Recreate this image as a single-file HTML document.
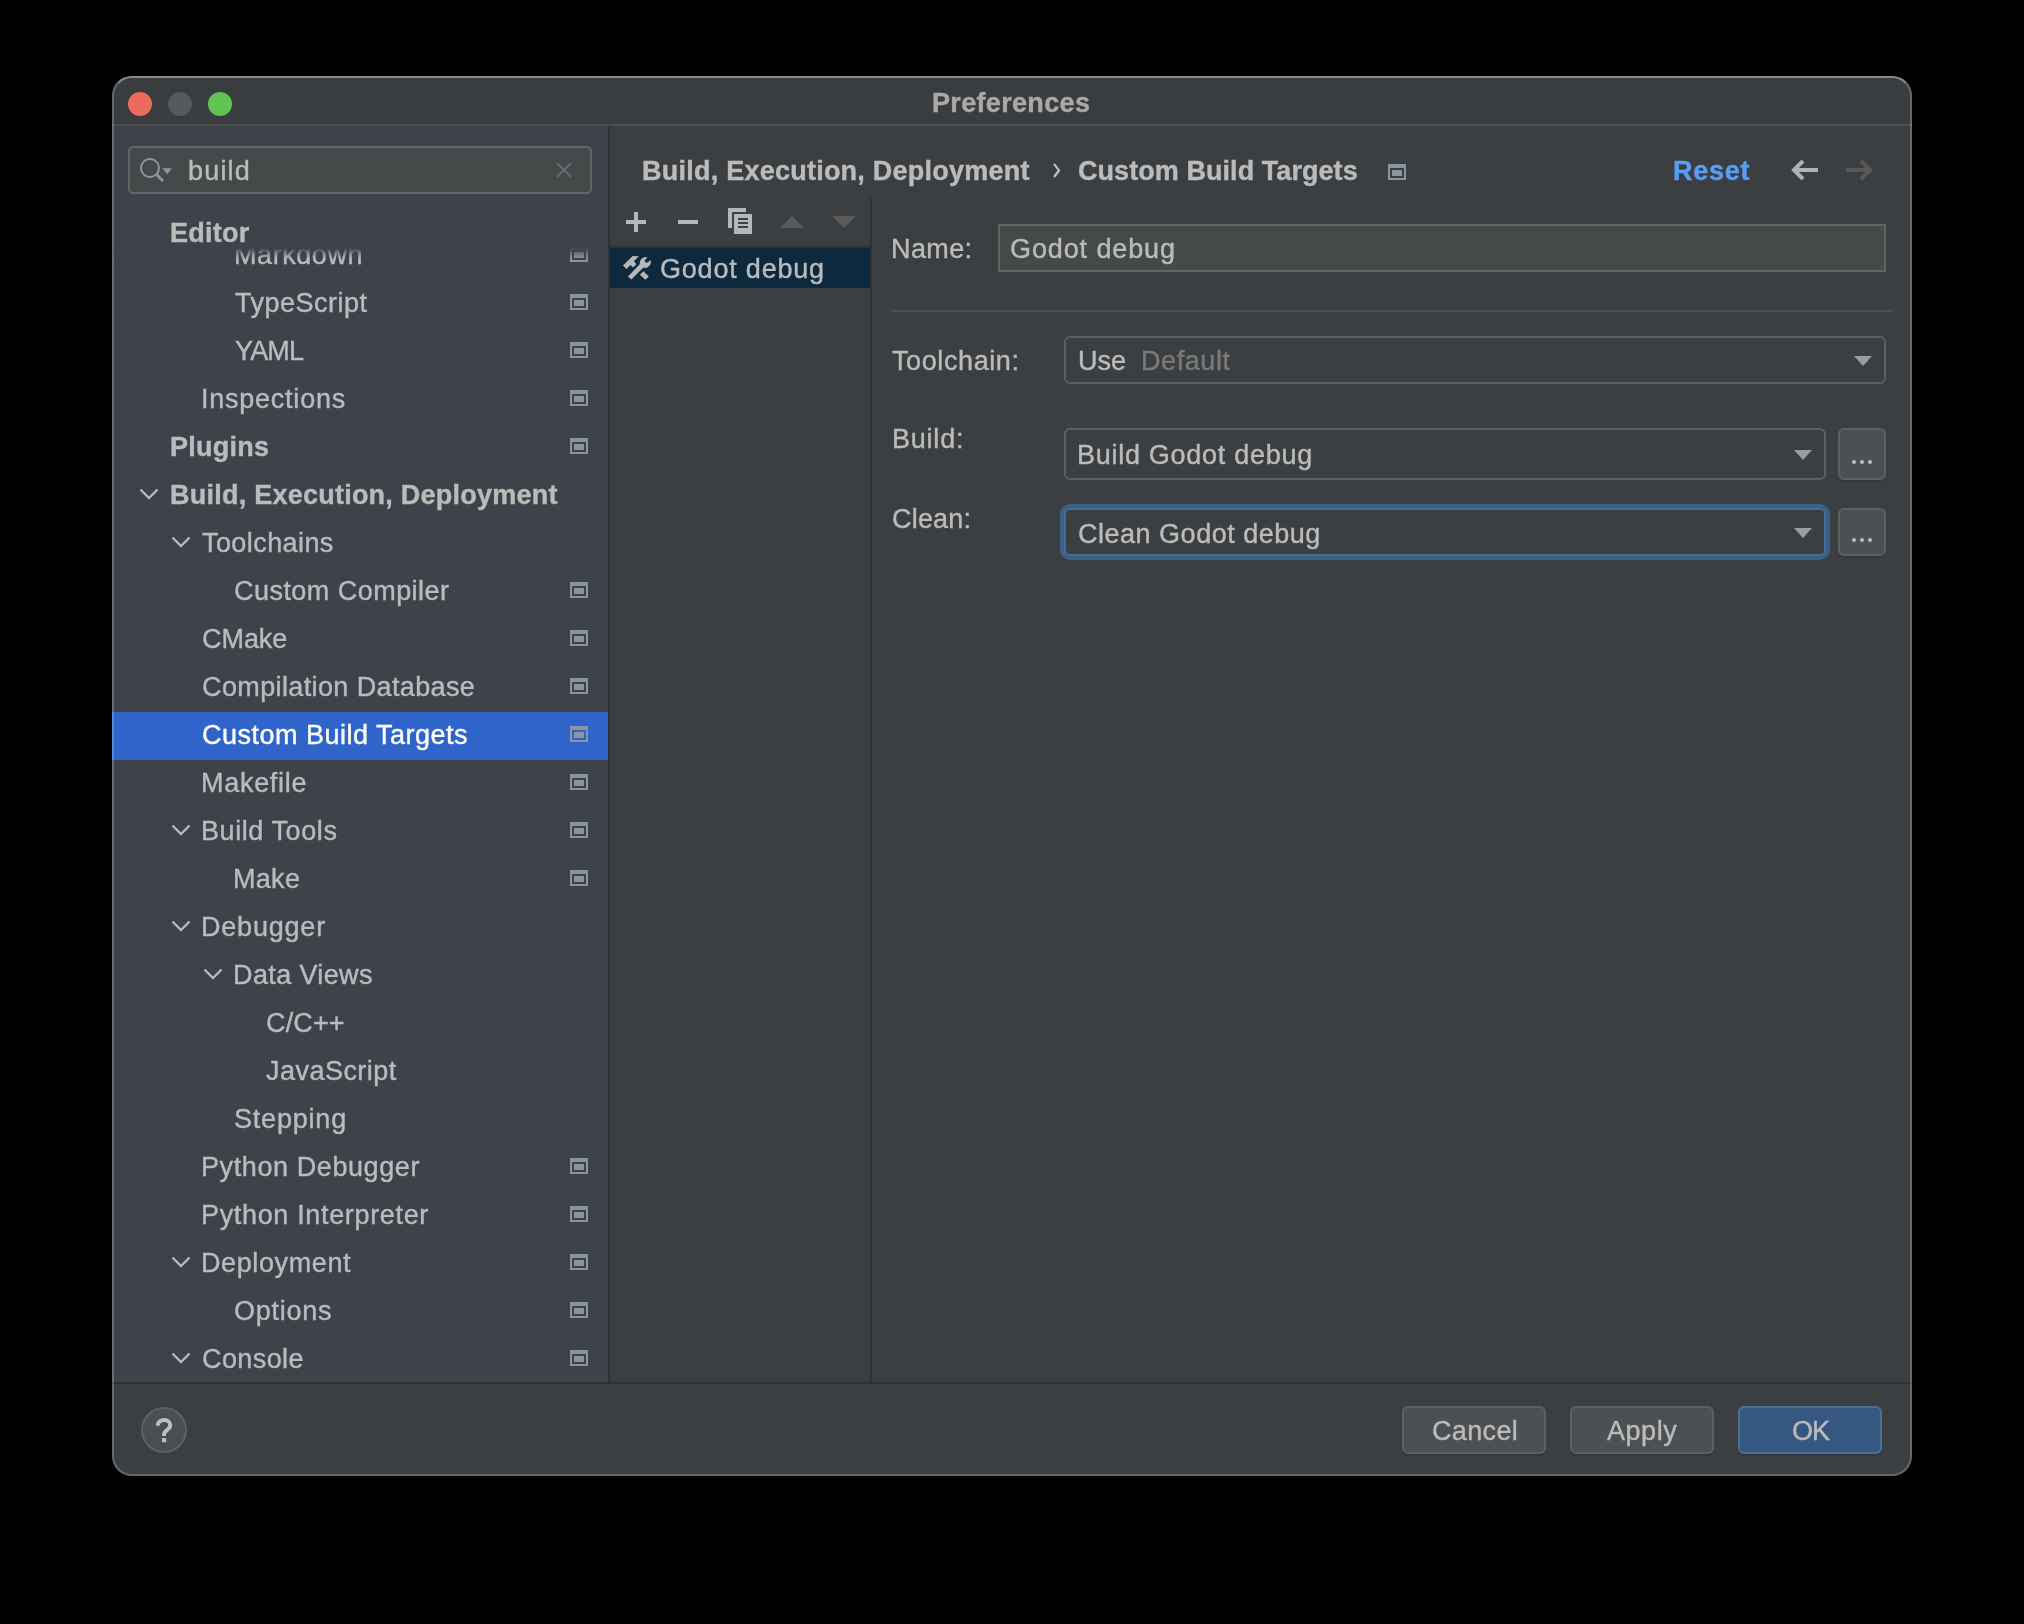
<!DOCTYPE html>
<html><head><meta charset="utf-8"><title>Preferences</title>
<style>
html,body{margin:0;padding:0;background:#000;width:2024px;height:1624px;overflow:hidden}
body{position:relative;font-family:'Liberation Sans', sans-serif}
.a{position:absolute}
.t{position:absolute;white-space:pre;will-change:transform;-webkit-text-stroke:0.4px currentColor}
.ic{position:absolute;width:18px;height:16px}
</style></head><body>

<div class="a" style="left:112px;top:76px;width:1800px;height:1400px;border-radius:20px;background:#3c3f41;overflow:hidden">
</div>
<div class="a" style="left:112px;top:76px;width:1800px;height:48px;border-radius:20px 20px 0 0;background:#3a3d3f"></div>
<div class="a" style="left:112px;top:124px;width:1800px;height:2px;background:#4e4e4e"></div>
<div class="a" style="left:128px;top:92px;width:24px;height:24px;border-radius:50%;background:#ed6a5e"></div>
<div class="a" style="left:168px;top:92px;width:24px;height:24px;border-radius:50%;background:#575a5d"></div>
<div class="a" style="left:208px;top:92px;width:24px;height:24px;border-radius:50%;background:#61c454"></div>
<div class="t" style="left:931.8px;top:90.0px;font-weight:bold;font-size:27px;line-height:27px;color:#a9a9a9;letter-spacing:0.33px">Preferences</div>
<div class="a" style="left:112px;top:126px;width:496px;height:1256px;background:#3e424b"></div>
<div class="a" style="left:608px;top:126px;width:2px;height:1256px;background:#303234"></div>
<div class="a" style="left:112px;top:1382px;width:1800px;height:2px;background:#323232"></div>
<div class="a" style="left:128px;top:146px;width:460px;height:44px;border:2px solid #646464;border-radius:5px;background:#45494a"></div>
<svg class="a" style="left:136px;top:154px" width="40" height="32" viewBox="136 154 40 32"><circle cx="150" cy="168" r="9" fill="none" stroke="#8c96a0" stroke-width="2"/><line x1="156.5" y1="174.5" x2="163" y2="181" stroke="#8c96a0" stroke-width="2.8"/><polygon points="162.3,168.2 172,168.2 167.2,174.3" fill="#8c96a0"/></svg>
<div class="t" style="left:187.6px;top:158.3px;font-weight:normal;font-size:27px;line-height:27px;color:#bbbbbb;letter-spacing:1.18px">build</div>
<svg class="a" style="left:552px;top:158px" width="24" height="24" viewBox="0 0 24 24"><path d="M5 5 L19 19 M19 5 L5 19" stroke="#626b71" stroke-width="2"/></svg>
<div class="a" style="left:112px;top:248px;width:496px;height:1134px;overflow:hidden">
<div class="a" style="left:0px;top:464px;width:496px;height:48px;background:#2f65ca"></div>
<div class="t" style="left:121.8px;top:-6.0px;font-weight:normal;font-size:27px;line-height:27px;color:#bbbbbb;letter-spacing:0.56px">Markdown</div>
<svg class="a" style="left:458px;top:-2px" width="18" height="16" viewBox="0 0 18 16"><rect x="0" y="0" width="18" height="16" fill="#8a959f"/><rect x="2" y="4" width="14" height="10" fill="#3e424b"/><rect x="4" y="6" width="10" height="6" fill="#8a959f"/></svg>
<div class="t" style="left:122.5px;top:42.0px;font-weight:normal;font-size:27px;line-height:27px;color:#bbbbbb;letter-spacing:0.50px">TypeScript</div>
<svg class="a" style="left:458px;top:46px" width="18" height="16" viewBox="0 0 18 16"><rect x="0" y="0" width="18" height="16" fill="#8a959f"/><rect x="2" y="4" width="14" height="10" fill="#3e424b"/><rect x="4" y="6" width="10" height="6" fill="#8a959f"/></svg>
<div class="t" style="left:122.5px;top:90.0px;font-weight:normal;font-size:27px;line-height:27px;color:#bbbbbb;letter-spacing:-0.83px">YAML</div>
<svg class="a" style="left:458px;top:94px" width="18" height="16" viewBox="0 0 18 16"><rect x="0" y="0" width="18" height="16" fill="#8a959f"/><rect x="2" y="4" width="14" height="10" fill="#3e424b"/><rect x="4" y="6" width="10" height="6" fill="#8a959f"/></svg>
<div class="t" style="left:89.0px;top:138.0px;font-weight:normal;font-size:27px;line-height:27px;color:#bbbbbb;letter-spacing:0.76px">Inspections</div>
<svg class="a" style="left:458px;top:142px" width="18" height="16" viewBox="0 0 18 16"><rect x="0" y="0" width="18" height="16" fill="#8a959f"/><rect x="2" y="4" width="14" height="10" fill="#3e424b"/><rect x="4" y="6" width="10" height="6" fill="#8a959f"/></svg>
<div class="t" style="left:57.5px;top:186.0px;font-weight:bold;font-size:27px;line-height:27px;color:#bbbbbb;letter-spacing:0.25px">Plugins</div>
<svg class="a" style="left:458px;top:190px" width="18" height="16" viewBox="0 0 18 16"><rect x="0" y="0" width="18" height="16" fill="#8a959f"/><rect x="2" y="4" width="14" height="10" fill="#3e424b"/><rect x="4" y="6" width="10" height="6" fill="#8a959f"/></svg>
<div class="t" style="left:57.5px;top:234.0px;font-weight:bold;font-size:27px;line-height:27px;color:#bbbbbb;letter-spacing:0.24px">Build, Execution, Deployment</div>
<svg class="a" style="left:25.3px;top:238px" width="24" height="16" viewBox="0 0 24 16"><path d="M3.5 3.5 L12 12 L20.5 3.5" fill="none" stroke="#bababa" stroke-width="2.3"/></svg>
<div class="t" style="left:90.0px;top:282.0px;font-weight:normal;font-size:27px;line-height:27px;color:#bbbbbb;letter-spacing:0.42px">Toolchains</div>
<svg class="a" style="left:57.3px;top:286px" width="24" height="16" viewBox="0 0 24 16"><path d="M3.5 3.5 L12 12 L20.5 3.5" fill="none" stroke="#bababa" stroke-width="2.3"/></svg>
<div class="t" style="left:122.0px;top:330.0px;font-weight:normal;font-size:27px;line-height:27px;color:#bbbbbb;letter-spacing:0.46px">Custom Compiler</div>
<svg class="a" style="left:458px;top:334px" width="18" height="16" viewBox="0 0 18 16"><rect x="0" y="0" width="18" height="16" fill="#8a959f"/><rect x="2" y="4" width="14" height="10" fill="#3e424b"/><rect x="4" y="6" width="10" height="6" fill="#8a959f"/></svg>
<div class="t" style="left:90.0px;top:378.0px;font-weight:normal;font-size:27px;line-height:27px;color:#bbbbbb;letter-spacing:-0.05px">CMake</div>
<svg class="a" style="left:458px;top:382px" width="18" height="16" viewBox="0 0 18 16"><rect x="0" y="0" width="18" height="16" fill="#8a959f"/><rect x="2" y="4" width="14" height="10" fill="#3e424b"/><rect x="4" y="6" width="10" height="6" fill="#8a959f"/></svg>
<div class="t" style="left:90.0px;top:426.0px;font-weight:normal;font-size:27px;line-height:27px;color:#bbbbbb;letter-spacing:0.38px">Compilation Database</div>
<svg class="a" style="left:458px;top:430px" width="18" height="16" viewBox="0 0 18 16"><rect x="0" y="0" width="18" height="16" fill="#8a959f"/><rect x="2" y="4" width="14" height="10" fill="#3e424b"/><rect x="4" y="6" width="10" height="6" fill="#8a959f"/></svg>
<div class="t" style="left:90.0px;top:474.0px;font-weight:normal;font-size:27px;line-height:27px;color:#ffffff;letter-spacing:0.49px">Custom Build Targets</div>
<svg class="a" style="left:458px;top:478px" width="18" height="16" viewBox="0 0 18 16"><rect x="0" y="0" width="18" height="16" fill="#8a959f"/><rect x="2" y="4" width="14" height="10" fill="#2f65ca"/><rect x="4" y="6" width="10" height="6" fill="#8a959f"/></svg>
<div class="t" style="left:89.0px;top:522.0px;font-weight:normal;font-size:27px;line-height:27px;color:#bbbbbb;letter-spacing:0.71px">Makefile</div>
<svg class="a" style="left:458px;top:526px" width="18" height="16" viewBox="0 0 18 16"><rect x="0" y="0" width="18" height="16" fill="#8a959f"/><rect x="2" y="4" width="14" height="10" fill="#3e424b"/><rect x="4" y="6" width="10" height="6" fill="#8a959f"/></svg>
<div class="t" style="left:89.0px;top:570.0px;font-weight:normal;font-size:27px;line-height:27px;color:#bbbbbb;letter-spacing:0.58px">Build Tools</div>
<svg class="a" style="left:458px;top:574px" width="18" height="16" viewBox="0 0 18 16"><rect x="0" y="0" width="18" height="16" fill="#8a959f"/><rect x="2" y="4" width="14" height="10" fill="#3e424b"/><rect x="4" y="6" width="10" height="6" fill="#8a959f"/></svg>
<svg class="a" style="left:57.3px;top:574px" width="24" height="16" viewBox="0 0 24 16"><path d="M3.5 3.5 L12 12 L20.5 3.5" fill="none" stroke="#bababa" stroke-width="2.3"/></svg>
<div class="t" style="left:121.0px;top:618.0px;font-weight:normal;font-size:27px;line-height:27px;color:#bbbbbb;letter-spacing:0.30px">Make</div>
<svg class="a" style="left:458px;top:622px" width="18" height="16" viewBox="0 0 18 16"><rect x="0" y="0" width="18" height="16" fill="#8a959f"/><rect x="2" y="4" width="14" height="10" fill="#3e424b"/><rect x="4" y="6" width="10" height="6" fill="#8a959f"/></svg>
<div class="t" style="left:89.0px;top:666.0px;font-weight:normal;font-size:27px;line-height:27px;color:#bbbbbb;letter-spacing:0.79px">Debugger</div>
<svg class="a" style="left:57.3px;top:670px" width="24" height="16" viewBox="0 0 24 16"><path d="M3.5 3.5 L12 12 L20.5 3.5" fill="none" stroke="#bababa" stroke-width="2.3"/></svg>
<div class="t" style="left:121.0px;top:714.0px;font-weight:normal;font-size:27px;line-height:27px;color:#bbbbbb;letter-spacing:0.38px">Data Views</div>
<svg class="a" style="left:89.3px;top:718px" width="24" height="16" viewBox="0 0 24 16"><path d="M3.5 3.5 L12 12 L20.5 3.5" fill="none" stroke="#bababa" stroke-width="2.3"/></svg>
<div class="t" style="left:153.8px;top:762.0px;font-weight:normal;font-size:27px;line-height:27px;color:#bbbbbb;letter-spacing:0.15px">C/C++</div>
<div class="t" style="left:153.8px;top:810.0px;font-weight:normal;font-size:27px;line-height:27px;color:#bbbbbb;letter-spacing:0.47px">JavaScript</div>
<div class="t" style="left:122.0px;top:858.0px;font-weight:normal;font-size:27px;line-height:27px;color:#bbbbbb;letter-spacing:0.80px">Stepping</div>
<div class="t" style="left:89.0px;top:906.0px;font-weight:normal;font-size:27px;line-height:27px;color:#bbbbbb;letter-spacing:0.59px">Python Debugger</div>
<svg class="a" style="left:458px;top:910px" width="18" height="16" viewBox="0 0 18 16"><rect x="0" y="0" width="18" height="16" fill="#8a959f"/><rect x="2" y="4" width="14" height="10" fill="#3e424b"/><rect x="4" y="6" width="10" height="6" fill="#8a959f"/></svg>
<div class="t" style="left:89.0px;top:954.0px;font-weight:normal;font-size:27px;line-height:27px;color:#bbbbbb;letter-spacing:0.66px">Python Interpreter</div>
<svg class="a" style="left:458px;top:958px" width="18" height="16" viewBox="0 0 18 16"><rect x="0" y="0" width="18" height="16" fill="#8a959f"/><rect x="2" y="4" width="14" height="10" fill="#3e424b"/><rect x="4" y="6" width="10" height="6" fill="#8a959f"/></svg>
<div class="t" style="left:89.0px;top:1002.0px;font-weight:normal;font-size:27px;line-height:27px;color:#bbbbbb;letter-spacing:0.61px">Deployment</div>
<svg class="a" style="left:458px;top:1006px" width="18" height="16" viewBox="0 0 18 16"><rect x="0" y="0" width="18" height="16" fill="#8a959f"/><rect x="2" y="4" width="14" height="10" fill="#3e424b"/><rect x="4" y="6" width="10" height="6" fill="#8a959f"/></svg>
<svg class="a" style="left:57.3px;top:1006px" width="24" height="16" viewBox="0 0 24 16"><path d="M3.5 3.5 L12 12 L20.5 3.5" fill="none" stroke="#bababa" stroke-width="2.3"/></svg>
<div class="t" style="left:122.0px;top:1050.0px;font-weight:normal;font-size:27px;line-height:27px;color:#bbbbbb;letter-spacing:0.73px">Options</div>
<svg class="a" style="left:458px;top:1054px" width="18" height="16" viewBox="0 0 18 16"><rect x="0" y="0" width="18" height="16" fill="#8a959f"/><rect x="2" y="4" width="14" height="10" fill="#3e424b"/><rect x="4" y="6" width="10" height="6" fill="#8a959f"/></svg>
<div class="t" style="left:90.0px;top:1098.0px;font-weight:normal;font-size:27px;line-height:27px;color:#bbbbbb;letter-spacing:0.40px">Console</div>
<svg class="a" style="left:458px;top:1102px" width="18" height="16" viewBox="0 0 18 16"><rect x="0" y="0" width="18" height="16" fill="#8a959f"/><rect x="2" y="4" width="14" height="10" fill="#3e424b"/><rect x="4" y="6" width="10" height="6" fill="#8a959f"/></svg>
<svg class="a" style="left:57.3px;top:1102px" width="24" height="16" viewBox="0 0 24 16"><path d="M3.5 3.5 L12 12 L20.5 3.5" fill="none" stroke="#bababa" stroke-width="2.3"/></svg>
</div>
<div class="a" style="left:112px;top:246px;width:496px;height:14px;background:linear-gradient(#3e424b 0px,#3e424b 2px,rgba(62,66,75,0.8) 4px,rgba(62,66,75,0.35) 8px,rgba(62,66,75,0) 13px)"></div>
<div class="t" style="left:169.7px;top:220.0px;font-weight:bold;font-size:27px;line-height:27px;color:#bbbbbb;letter-spacing:0.26px">Editor</div>
<div class="t" style="left:641.5px;top:158.3px;font-weight:bold;font-size:27px;line-height:27px;color:#bbbbbb;letter-spacing:0.24px">Build, Execution, Deployment</div>
<svg class="a" style="left:1050px;top:160px" width="14" height="24" viewBox="0 0 14 24"><path d="M4 3.8 L9 10.4 L4 17" fill="none" stroke="#c2c2c2" stroke-width="2.2"/></svg>
<div class="t" style="left:1077.9px;top:158.3px;font-weight:bold;font-size:27px;line-height:27px;color:#bbbbbb;letter-spacing:0.06px">Custom Build Targets</div>
<svg class="a" style="left:1388px;top:164px" width="18" height="16" viewBox="0 0 18 16"><rect x="0" y="0" width="18" height="16" fill="#8a959f"/><rect x="2" y="4" width="14" height="10" fill="#3c3f41"/><rect x="4" y="6" width="10" height="6" fill="#8a959f"/></svg>
<div class="t" style="left:1673.0px;top:157.8px;font-weight:bold;font-size:27px;line-height:27px;color:#589df6;letter-spacing:0.75px">Reset</div>
<svg class="a" style="left:1788px;top:156px" width="34" height="28" viewBox="0 0 34 28"><path d="M6 14 H30 M15 5 L6 14 L15 23" fill="none" stroke="#afb1b3" stroke-width="4"/></svg>
<svg class="a" style="left:1842px;top:156px" width="34" height="28" viewBox="0 0 34 28"><path d="M4 14 H28 M19 5 L28 14 L19 23" fill="none" stroke="#585858" stroke-width="4"/></svg>
<svg class="a" style="left:620px;top:200px" width="250" height="44" viewBox="620 200 250 44"><rect x="634" y="212" width="4" height="20" fill="#b5b6b8"/><rect x="626" y="220" width="20" height="4" fill="#b5b6b8"/><rect x="678" y="220" width="20" height="4" fill="#b5b6b8"/><path d="M728 208 H746 V212 H732 V228 H728 Z" fill="#b5b6b8"/><rect x="734" y="214" width="18" height="20" fill="#b5b6b8"/><rect x="738" y="218" width="10" height="2" fill="#3c3f41"/><rect x="738" y="222" width="10" height="2" fill="#3c3f41"/><rect x="738" y="226" width="10" height="2" fill="#3c3f41"/><polygon points="780,228 804,228 792,216" fill="#5a5a5a"/><polygon points="832,216 856,216 844,228" fill="#5a5a5a"/></svg>
<div class="a" style="left:610px;top:246px;width:260px;height:2px;background:#323232"></div>
<div class="a" style="left:610px;top:248px;width:260px;height:40px;background:#0d293e"></div>
<svg class="a" style="left:620px;top:252px" width="34" height="32" viewBox="620 252 34 32"><polygon points="623,265.6 632.6,256.1 638.9,256.2 633.8,261.3 636.5,264.2 633,267.4 630.4,265 626.5,269" fill="#b5b6b8"/><polygon points="643.4,271.2 648.8,276.6 645.4,279.8 639.9,274.7" fill="#b5b6b8"/><polygon points="627.9,276.6 639.7,264.2 639.9,261.9 641,259.3 642.7,257.9 645,257.1 647.4,257.2 644.4,260.7 646.4,263 650.7,260.3 651,262.5 650.4,264.6 647.6,267.4 645,268 643.2,267.8 631.4,279.6" fill="#b5b6b8"/></svg>
<div class="t" style="left:659.8px;top:256.0px;font-weight:normal;font-size:27px;line-height:27px;color:#bbbbbb;letter-spacing:0.80px">Godot debug</div>
<div class="a" style="left:870px;top:198px;width:2px;height:1184px;background:#303234"></div>
<div class="t" style="left:890.9px;top:236.0px;font-weight:normal;font-size:27px;line-height:27px;color:#bbbbbb;letter-spacing:0.40px">Name:</div>
<div class="a" style="left:998px;top:224px;width:884px;height:44px;border:2px solid #646464;background:#45494a"></div>
<div class="t" style="left:1009.5px;top:236.0px;font-weight:normal;font-size:27px;line-height:27px;color:#bbbbbb;letter-spacing:0.89px">Godot debug</div>
<div class="a" style="left:892px;top:310px;width:1000px;height:2px;background:#515151"></div>
<div class="t" style="left:891.9px;top:348.0px;font-weight:normal;font-size:27px;line-height:27px;color:#bbbbbb;letter-spacing:0.60px">Toolchain:</div>
<div class="a" style="left:1064px;top:336px;width:818px;height:44px;border:2px solid #5e6060;border-radius:6px;background:#3c3f41"></div>
<div class="t" style="left:1077.6px;top:348.0px;font-weight:normal;font-size:27px;line-height:27px;color:#bbbbbb;letter-spacing:0.00px">Use</div>
<div class="t" style="left:1140.8px;top:348.0px;font-weight:normal;font-size:27px;line-height:27px;color:#7a7a7a;letter-spacing:0.57px">Default</div>
<svg class="a" style="left:1854.0px;top:356.0px" width="18" height="10" viewBox="0 0 18 10"><polygon points="0,0 18,0 9,10" fill="#9a9da1"/></svg>
<div class="t" style="left:891.5px;top:426.0px;font-weight:normal;font-size:27px;line-height:27px;color:#bbbbbb;letter-spacing:0.78px">Build:</div>
<div class="a" style="left:1064px;top:428px;width:758px;height:48px;border:2px solid #5e6060;border-radius:6px;background:#3c3f41"></div>
<div class="t" style="left:1076.5px;top:442.0px;font-weight:normal;font-size:27px;line-height:27px;color:#bbbbbb;letter-spacing:0.72px">Build Godot debug</div>
<svg class="a" style="left:1794.0px;top:450.0px" width="18" height="10" viewBox="0 0 18 10"><polygon points="0,0 18,0 9,10" fill="#9a9da1"/></svg>
<div class="a" style="left:1838px;top:428px;width:44px;height:48px;border:2px solid #5e6060;border-radius:6px;background:#4c5052;box-shadow:0 2px 0 #353739"></div><div class="a" style="left:1852px;top:460px;width:4px;height:4px;border-radius:50%;background:#bbbbbb"></div><div class="a" style="left:1860px;top:460px;width:4px;height:4px;border-radius:50%;background:#bbbbbb"></div><div class="a" style="left:1868px;top:460px;width:4px;height:4px;border-radius:50%;background:#bbbbbb"></div>
<div class="t" style="left:891.9px;top:506.0px;font-weight:normal;font-size:27px;line-height:27px;color:#bbbbbb;letter-spacing:0.20px">Clean:</div>
<div class="a" style="left:1060px;top:504px;width:762px;height:48px;border:4px solid #3d6185;border-radius:10px;background:#3d6185"></div>
<div class="a" style="left:1064px;top:508px;width:758px;height:44px;border:2px solid #426c9a;border-radius:6px;background:#3c3f41"></div>
<div class="t" style="left:1077.5px;top:520.5px;font-weight:normal;font-size:27px;line-height:27px;color:#bbbbbb;letter-spacing:0.51px">Clean Godot debug</div>
<svg class="a" style="left:1794.0px;top:528.0px" width="18" height="10" viewBox="0 0 18 10"><polygon points="0,0 18,0 9,10" fill="#9a9da1"/></svg>
<div class="a" style="left:1838px;top:508px;width:44px;height:44px;border:2px solid #5e6060;border-radius:6px;background:#4c5052;box-shadow:0 2px 0 #353739"></div><div class="a" style="left:1852px;top:538px;width:4px;height:4px;border-radius:50%;background:#bbbbbb"></div><div class="a" style="left:1860px;top:538px;width:4px;height:4px;border-radius:50%;background:#bbbbbb"></div><div class="a" style="left:1868px;top:538px;width:4px;height:4px;border-radius:50%;background:#bbbbbb"></div>
<div class="a" style="left:141px;top:1407px;width:42px;height:42px;border:2px solid #5f6062;border-radius:50%;background:#4a4e51"></div>
<svg class="a" style="left:150px;top:1412px" width="28" height="36" viewBox="150 1412 28 36"><path d="M157.8 1425.8 C157.8 1421.9 160.6 1419.9 164.1 1419.9 C167.8 1419.9 170.2 1422.2 170.2 1425.2 C170.2 1429.8 164 1430.2 164 1434.6 V1436" fill="none" stroke="#bdbdbd" stroke-width="4"/><rect x="162" y="1438" width="4.2" height="4.2" fill="#bdbdbd"/></svg>
<div class="a" style="left:1402px;top:1406px;width:140px;height:44px;border:2px solid #5e6060;border-radius:6px;background:#4c5052;box-shadow:0 2px 0 #353739"></div>
<div class="a" style="left:1570px;top:1406px;width:140px;height:44px;border:2px solid #5e6060;border-radius:6px;background:#4c5052;box-shadow:0 2px 0 #353739"></div>
<div class="a" style="left:1738px;top:1406px;width:140px;height:44px;border:2px solid #4a6f96;border-radius:6px;background:#365880;box-shadow:0 2px 0 #353739"></div>
<div class="t" style="left:1431.8px;top:1418.4px;font-weight:normal;font-size:27px;line-height:27px;color:#bbbbbb;letter-spacing:0.36px">Cancel</div>
<div class="t" style="left:1606.7px;top:1418.4px;font-weight:normal;font-size:27px;line-height:27px;color:#bbbbbb;letter-spacing:0.55px">Apply</div>
<div class="t" style="left:1791.7px;top:1418.4px;font-weight:normal;font-size:27px;line-height:27px;color:#bbbbbb;letter-spacing:-0.90px">OK</div>
<div class="a" style="left:112px;top:76px;width:1796px;height:1396px;border:2px solid rgba(255,255,255,0.22);border-top-color:rgba(255,255,255,0.4);border-radius:20px"></div>
</body></html>
